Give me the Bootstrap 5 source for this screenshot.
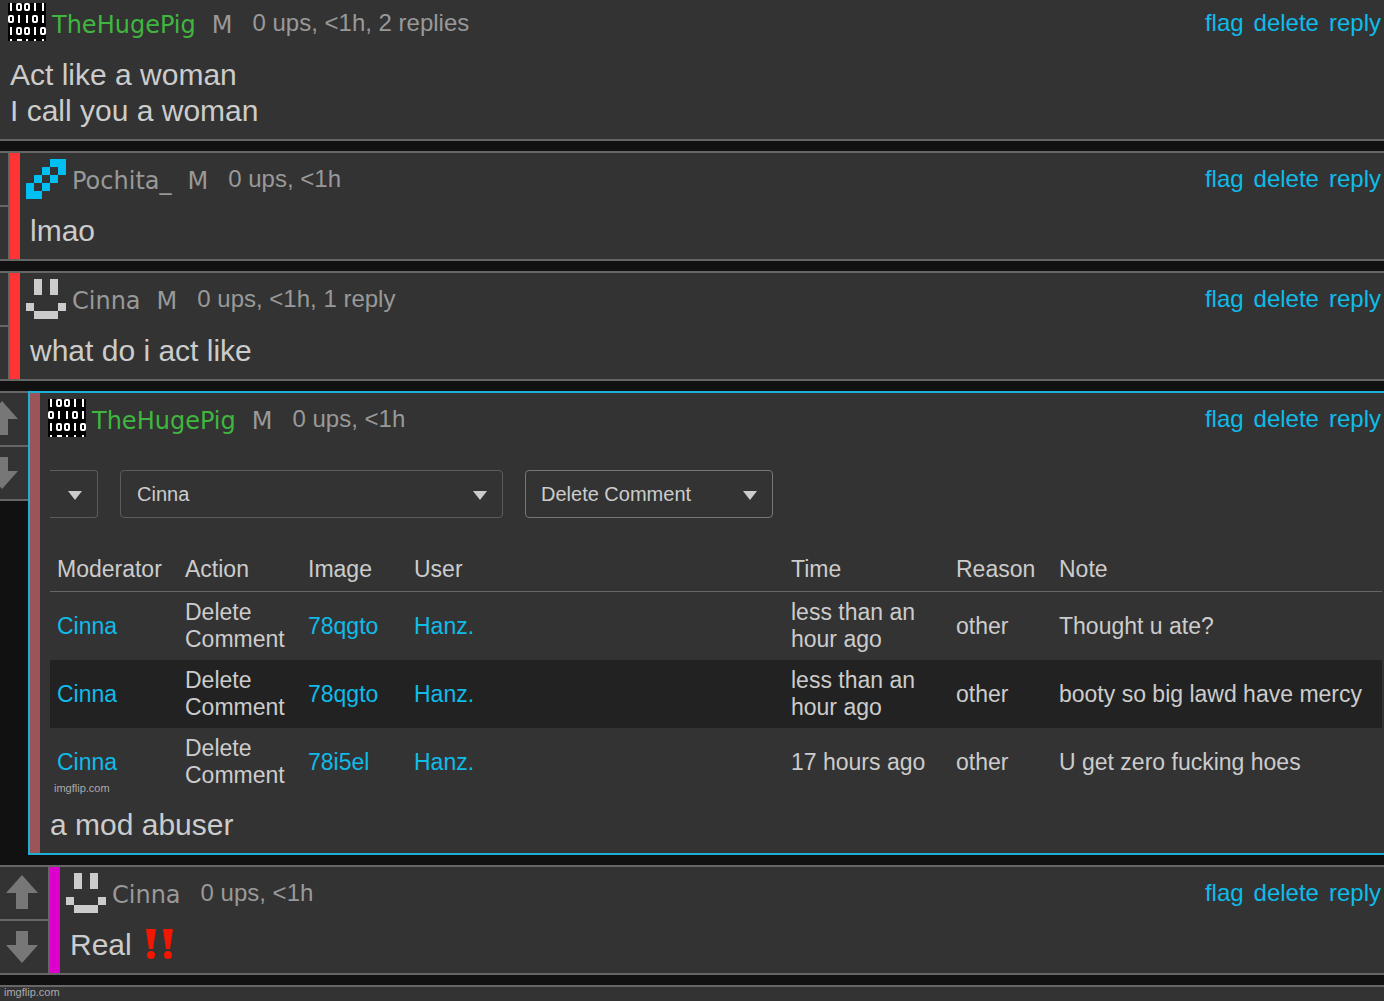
<!DOCTYPE html>
<html lang="en">
<head>
<meta charset="utf-8">
<meta name="viewport" content="width=device-width, initial-scale=1">
<title>Comments</title>
<link href="https://cdn.jsdelivr.net/npm/bootstrap@5.3.0/dist/css/bootstrap.min.css" rel="stylesheet">
<style>
  :root { --panel: #333; --line: #666; --text: #ccc; --muted: #999; --link: #0ebbe9; }
  body { background: #111; color: var(--text); font-family: "Liberation Sans", Arial, sans-serif; overflow-x: hidden; }
  a { color: var(--link); text-decoration: none; }
  .thread { gap: 10px; overflow: hidden; }
  .vote-col { flex: none; overflow: hidden; border-bottom: 2px solid var(--line); }
  .depth-1 .vote-col { width: 8px; }
  .depth-2 .vote-col { width: 28px; }
  .depth-3 .vote-col { width: 48px; }
  .vote-btn { height: 54px; padding: 8px 10px 0 0; background: var(--panel); border: 0; border-top: 2px solid var(--line); color: #777; }
  .vote-btn svg { flex: none; }
  .vote-btn + .vote-btn { padding-top: 10px; }
  .post { background: var(--panel); border: 2px solid var(--line); border-right: 0; min-width: 0; }
  .post-root { border-left: 0; border-top: 0; margin-top: -3px; }
  .post-linked { border-color: #1cb0d9; }
  .stripe { width: 10px; flex: none; }
  .stripe-red { background: #ff3535; }
  .stripe-rose { background: #9b5558; }
  .stripe-pink { background: #dd00cc; }
  .post-head { height: 60px; padding: 6px 3px 0 6px; font-size: 24px; line-height: 40px; }
  .post-head .avatar { margin-right: 6px; flex: none; }
  .user-name { font-family: "DejaVu Sans", Verdana, sans-serif; color: var(--muted); line-height: 44px; }
  .user-green { color: #3fb73f; }
  .mod-flag { font-family: "DejaVu Sans", Verdana, sans-serif; color: var(--muted); line-height: 44px; margin-left: 16px; }
  .post-meta { color: var(--muted); margin-left: 20px; }
  .post-links { gap: 10px; }
  .post-body { padding: 0 2px 10px 10px; font-size: 30px; line-height: 36px; }
  .bangs { margin-left: 5px; vertical-align: -5px; }
  .mod-log { padding: 17px 0 11px; font-size: 23px; line-height: 27px; }
  .filters { gap: 22px; margin-bottom: 33px; }
  .form-select.filter { height: 48px; width: 248px; padding: 0 36px 0 15px; color: var(--text); font-size: 20px; line-height: 26px;
    border: 1px solid #777; border-radius: 4px; background-color: var(--panel); background-size: 14px 9px; background-position: right 15px top 20px;
    background-image: url("data:image/svg+xml,%3Csvg xmlns='http://www.w3.org/2000/svg' viewBox='0 0 14 9'%3E%3Cpath d='M0 0h14L7 9z' fill='%23ccc'/%3E%3C/svg%3E"); }
  .form-select.filter-cut { width: 48px; padding: 0; border-left: 0; border-radius: 0 4px 4px 0; border-color: #5c5c5c; }
  .form-select.filter-wide { width: 383px; border-color: #5c5c5c; padding-left: 16px; }
  .log-table { table-layout: fixed; width: 100%; }
  .log-table th { font-weight: 400; padding: 5px 7px 8px; border-bottom: 1px solid var(--line); }
  .log-table td { padding: 7px; height: 68px; vertical-align: middle; }
  .log-table tbody tr:nth-child(2) { background: #222; }
  .c-mod { width: 128px; } .c-act { width: 123px; } .c-img { width: 106px; }
  .c-time { width: 165px; } .c-why { width: 103px; } .c-note { width: 330px; }
  .credit { font-size: 11px; line-height: 14px; color: #aaa; }
  .log-credit { left: 4px; bottom: 12px; }
  .tail { background: var(--panel); border-top: 2px solid var(--line); padding: 0 0 4px 4px; line-height: 10px; }
</style>
<script src="https://cdn.jsdelivr.net/npm/bootstrap@5.3.0/dist/js/bootstrap.bundle.min.js"></script>
</head>
<body>
<svg class="d-none" aria-hidden="true">
  <symbol id="av-binary" viewBox="0 0 40 40">
    <path d="M2 0h38v38H2z" fill="#000"/>
    <g fill="none" stroke="#fff" stroke-width="2">
      <path d="M5 0v8M29 0v8M37 0v8M13 12v8M21 12v8M37 12v8M5 24v8M29 24v8M5 36v2M21 36v2M29 36v2M37 36v2M11 37h5"/>
      <rect x="11" y="1" width="4" height="6" rx="1"/><rect x="19" y="1" width="4" height="6" rx="1"/>
      <rect x="3" y="13" width="4" height="6" rx="1"/><rect x="27" y="13" width="4" height="6" rx="1"/>
      <rect x="11" y="25" width="4" height="6" rx="1"/><rect x="19" y="25" width="4" height="6" rx="1"/><rect x="35" y="25" width="4" height="6" rx="1"/>
    </g>
  </symbol>
  <symbol id="av-chain" viewBox="0 0 5 5">
    <path fill="#00bff3" shape-rendering="crispEdges" d="M3 0h2v2h-1v-1h-1zM2 1h1v1h-1zM1 2h1v1h-1zM3 2h1v1h-1zM0 3h1v1h1v1h-2zM2 3h1v1h-1z"/>
  </symbol>
  <symbol id="av-smile" viewBox="0 0 5 5">
    <path fill="#ccc" shape-rendering="crispEdges" d="M1 0h1v2h-1zM3 0h1v2h-1zM0 3h1v1h-1zM4 3h1v1h-1zM1 4h3v1h-3z"/>
  </symbol>
  <symbol id="ic-up" viewBox="0 0 32 34"><path fill="currentColor" d="M16 0L32 18H22V34H10V18H0z"/></symbol>
  <symbol id="ic-down" viewBox="0 0 32 32"><path fill="currentColor" d="M16 32L32 14H22V0H10V14H0z"/></symbol>
</svg>

<main class="thread d-flex flex-column">

  <article class="post post-root">
    <header class="post-head d-flex align-items-start">
      <svg class="avatar" width="40" height="40"><use href="#av-binary"/></svg>
      <a class="user-name user-green" href="#">TheHugePig</a><span class="mod-flag">M</span>
      <span class="post-meta">0 ups, &lt;1h, 2 replies</span>
      <nav class="post-links d-flex ms-auto" aria-label="Comment actions"><a href="#">flag</a><a href="#">delete</a><a href="#">reply</a></nav>
    </header>
    <div class="post-body">Act like a woman<br>I call you a woman</div>
  </article>

  <div class="depth-1 d-flex align-items-start">
    <div class="vote-col d-flex flex-column">
      <button class="vote-btn d-flex justify-content-end align-items-start" type="button" aria-label="Upvote"><svg width="32" height="34"><use href="#ic-up"/></svg></button>
      <button class="vote-btn d-flex justify-content-end align-items-start" type="button" aria-label="Downvote"><svg width="32" height="32"><use href="#ic-down"/></svg></button>
    </div>
    <article class="post d-flex flex-grow-1">
      <div class="stripe stripe-red"></div>
      <div class="flex-grow-1">
        <header class="post-head d-flex align-items-start">
          <svg class="avatar" width="40" height="40"><use href="#av-chain"/></svg>
          <a class="user-name" href="#">Pochita_</a><span class="mod-flag">M</span>
          <span class="post-meta">0 ups, &lt;1h</span>
          <nav class="post-links d-flex ms-auto" aria-label="Comment actions"><a href="#">flag</a><a href="#">delete</a><a href="#">reply</a></nav>
        </header>
        <div class="post-body">lmao</div>
      </div>
    </article>
  </div>

  <div class="depth-1 d-flex align-items-start">
    <div class="vote-col d-flex flex-column">
      <button class="vote-btn d-flex justify-content-end align-items-start" type="button" aria-label="Upvote"><svg width="32" height="34"><use href="#ic-up"/></svg></button>
      <button class="vote-btn d-flex justify-content-end align-items-start" type="button" aria-label="Downvote"><svg width="32" height="32"><use href="#ic-down"/></svg></button>
    </div>
    <article class="post d-flex flex-grow-1">
      <div class="stripe stripe-red"></div>
      <div class="flex-grow-1">
        <header class="post-head d-flex align-items-start">
          <svg class="avatar" width="40" height="40"><use href="#av-smile"/></svg>
          <a class="user-name" href="#">Cinna</a><span class="mod-flag">M</span>
          <span class="post-meta">0 ups, &lt;1h, 1 reply</span>
          <nav class="post-links d-flex ms-auto" aria-label="Comment actions"><a href="#">flag</a><a href="#">delete</a><a href="#">reply</a></nav>
        </header>
        <div class="post-body">what do i act like</div>
      </div>
    </article>
  </div>

  <div class="depth-2 d-flex align-items-start">
    <div class="vote-col d-flex flex-column">
      <button class="vote-btn d-flex justify-content-end align-items-start" type="button" aria-label="Upvote"><svg width="32" height="34"><use href="#ic-up"/></svg></button>
      <button class="vote-btn d-flex justify-content-end align-items-start" type="button" aria-label="Downvote"><svg width="32" height="32"><use href="#ic-down"/></svg></button>
    </div>
    <article class="post post-linked d-flex flex-grow-1">
      <div class="stripe stripe-rose"></div>
      <div class="flex-grow-1">
        <header class="post-head d-flex align-items-start">
          <svg class="avatar" width="40" height="40"><use href="#av-binary"/></svg>
          <a class="user-name user-green" href="#">TheHugePig</a><span class="mod-flag">M</span>
          <span class="post-meta">0 ups, &lt;1h</span>
          <nav class="post-links d-flex ms-auto" aria-label="Comment actions"><a href="#">flag</a><a href="#">delete</a><a href="#">reply</a></nav>
        </header>
        <div class="post-body">
          <section class="mod-log position-relative">
            <form class="filters d-flex">
              <select class="form-select filter filter-cut" aria-label="Stream"><option></option></select>
              <select class="form-select filter filter-wide" aria-label="Moderator"><option>Cinna</option></select>
              <select class="form-select filter" aria-label="Action"><option>Delete Comment</option></select>
            </form>
            <table class="log-table">
              <colgroup><col class="c-mod"><col class="c-act"><col class="c-img"><col><col class="c-time"><col class="c-why"><col class="c-note"></colgroup>
              <thead><tr><th>Moderator</th><th>Action</th><th>Image</th><th>User</th><th>Time</th><th>Reason</th><th>Note</th></tr></thead>
              <tbody>
                <tr><td><a href="#">Cinna</a></td><td>Delete Comment</td><td><a href="#">78qgto</a></td><td><a href="#">Hanz.</a></td><td>less than an hour ago</td><td>other</td><td>Thought u ate?</td></tr>
                <tr><td><a href="#">Cinna</a></td><td>Delete Comment</td><td><a href="#">78qgto</a></td><td><a href="#">Hanz.</a></td><td>less than an hour ago</td><td>other</td><td>booty so big lawd have mercy</td></tr>
                <tr><td><a href="#">Cinna</a></td><td>Delete Comment</td><td><a href="#">78i5el</a></td><td><a href="#">Hanz.</a></td><td>17 hours ago</td><td>other</td><td>U get zero fucking hoes</td></tr>
              </tbody>
            </table>
            <span class="credit log-credit position-absolute">imgflip.com</span>
          </section>
          a mod abuser
        </div>
      </div>
    </article>
  </div>

  <div class="depth-3 d-flex align-items-start">
    <div class="vote-col d-flex flex-column">
      <button class="vote-btn d-flex justify-content-end align-items-start" type="button" aria-label="Upvote"><svg width="32" height="34"><use href="#ic-up"/></svg></button>
      <button class="vote-btn d-flex justify-content-end align-items-start" type="button" aria-label="Downvote"><svg width="32" height="32"><use href="#ic-down"/></svg></button>
    </div>
    <article class="post d-flex flex-grow-1">
      <div class="stripe stripe-pink"></div>
      <div class="flex-grow-1">
        <header class="post-head d-flex align-items-start">
          <svg class="avatar" width="40" height="40"><use href="#av-smile"/></svg>
          <a class="user-name" href="#">Cinna</a>
          <span class="post-meta">0 ups, &lt;1h</span>
          <nav class="post-links d-flex ms-auto" aria-label="Comment actions"><a href="#">flag</a><a href="#">delete</a><a href="#">reply</a></nav>
        </header>
        <div class="post-body">Real <svg class="bangs" width="30" height="32" viewBox="0 0 30 32" role="img" aria-label="Double exclamation mark"><g fill="#f01800"><path d="M1 1h10L8 21H4zM18 1h10L25 21h-4z"/><circle cx="6" cy="27" r="4"/><circle cx="23" cy="27" r="4"/></g></svg></div>
      </div>
    </article>
  </div>

  <footer class="credit tail">imgflip.com</footer>
</main>
</body>
</html>
